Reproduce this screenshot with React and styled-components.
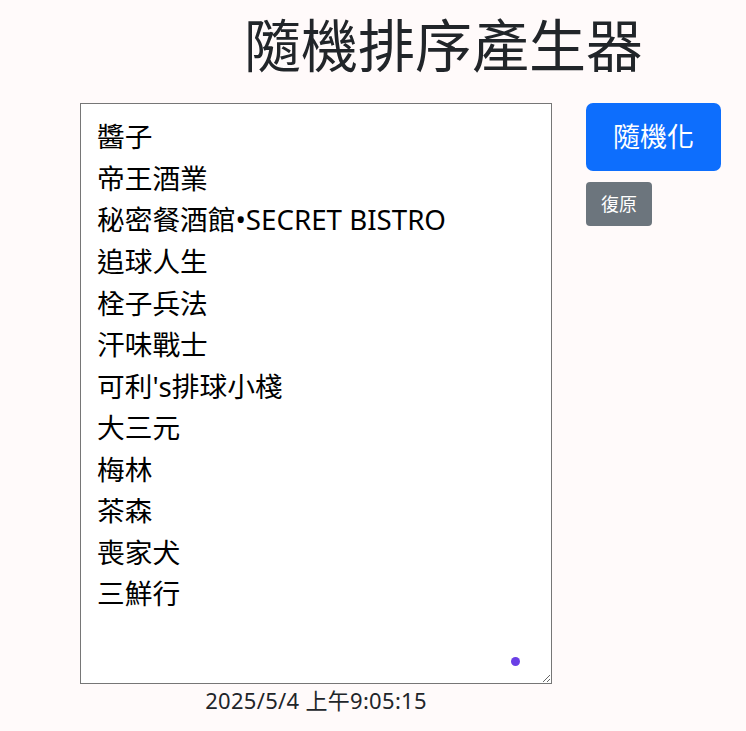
import React, { useState } from "react";
import styled, { createGlobalStyle } from "styled-components";

const items = [
  "醬子",
  "帝王酒業",
  "秘密餐酒館•SECRET BISTRO",
  "追球人生",
  "栓子兵法",
  "汗味戰士",
  "可利's排球小棧",
  "大三元",
  "梅林",
  "茶森",
  "喪家犬",
  "三鮮行",
].join("\n");

const fonts = `"Noto Sans", "Noto Sans CJK TC", sans-serif`;

const GlobalStyle = createGlobalStyle`
  body {
    margin: 0;
    background: #fffafa;
    color: #212529;
    font-family: ${fonts};
  }
`;

const Page = styled.div`
  padding: 8px 0 0;
`;

const Title = styled.h1`
  margin: 0 0 27px;
  padding-left: 244px;
  font-family: "Noto Sans CJK TC", sans-serif;
  font-size: 57px;
  font-weight: 400;
  line-height: 1.2;
  color: #212529;
`;

const Row = styled.div`
  display: flex;
  align-items: flex-start;
  gap: 34px;
  padding-left: 80px;
`;

const Column = styled.div`
  display: flex;
  flex-direction: column;
  align-items: center;
`;

const Field = styled.div`
  position: relative;
`;

const TextBox = styled.textarea`
  display: block;
  box-sizing: border-box;
  width: 472px;
  height: 581px;
  margin: 0;
  padding: 12px 16px;
  border: 1px solid #767676;
  border-radius: 0;
  background: #fff;
  color: #000;
  font-family: ${fonts};
  font-size: 27.7px;
  line-height: 1.5;
  outline: none;
`;

const Dot = styled.span`
  position: absolute;
  left: 431px;
  top: 554px;
  width: 9px;
  height: 9px;
  border-radius: 50%;
  background: #6a3fe6;
`;

const Stamp = styled.div`
  font-size: 22px;
  line-height: 32px;
  letter-spacing: 0.3px;
  color: #212529;
`;

const Actions = styled.div`
  display: flex;
  flex-direction: column;
  align-items: flex-start;
  gap: 11px;
`;

const Button = styled.button`
  border: none;
  color: #fff;
  cursor: pointer;
  font-family: ${fonts};
  background: ${(p) => (p.$variant === "secondary" ? "#6c757d" : "#0d6efd")};
  font-size: ${(p) => (p.$size === "sm" ? "18px" : "27px")};
  line-height: ${(p) => (p.$size === "sm" ? "27px" : "40px")};
  padding: ${(p) => (p.$size === "sm" ? "9px 15px 8px" : "14px 27px")};
  border-radius: ${(p) => (p.$size === "sm" ? "4px" : "7px")};
`;

export default function App() {
  const [text, setText] = useState(items);

  const shuffle = () => {
    const lines = text.split("\n");
    for (let i = lines.length - 1; i > 0; i--) {
      const j = Math.floor(Math.random() * (i + 1));
      [lines[i], lines[j]] = [lines[j], lines[i]];
    }
    setText(lines.join("\n"));
  };

  return (
    <Page>
      <GlobalStyle />
      <Title>隨機排序產生器</Title>
      <Row>
        <Column>
          <Field>
            <TextBox value={text} onChange={(e) => setText(e.target.value)} />
            <Dot />
          </Field>
          <Stamp>2025/5/4 上午9:05:15</Stamp>
        </Column>
        <Actions>
          <Button onClick={shuffle}>隨機化</Button>
          <Button $variant="secondary" $size="sm" onClick={() => setText(items)}>
            復原
          </Button>
        </Actions>
      </Row>
    </Page>
  );
}
